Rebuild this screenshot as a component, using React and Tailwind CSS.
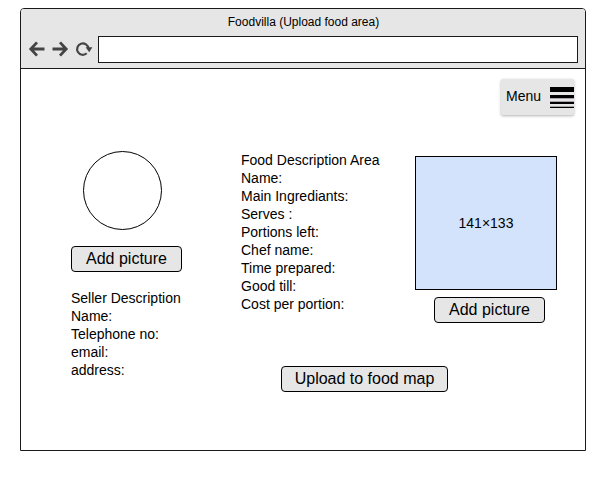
const SELLER_FIELDS = ["Seller Description", "Name:", "Telephone no:", "email:", "address:"];

const FOOD_FIELDS = [
  "Food Description Area",
  "Name:",
  "Main Ingrediants:",
  "Serves :",
  "Portions left:",
  "Chef name:",
  "Time prepared:",
  "Good till:",
  "Cost per portion:",
];

function Button({ className, children }) {
  return (
    <button
      className={`flex h-[26px] items-center justify-center rounded-[4px] border border-black bg-[#e6e6e6] pb-px text-[16px] leading-[18px] whitespace-nowrap text-black ${className}`}
    >
      {children}
    </button>
  );
}

function FieldList({ items }) {
  return (
    <ul className="text-[14px] leading-[18px] whitespace-nowrap">
      {items.map((item) => (
        <li key={item}>{item}</li>
      ))}
    </ul>
  );
}

function NavIcons() {
  return (
    <svg className="mt-[4px] ml-[7px] h-[17px] w-[66px] shrink-0" viewBox="0 0 66 17" fill="none" stroke="#444">
      <g strokeWidth="2.8">
        <path d="M16.500 9H4M9 2.400 2.800 9 9 15.600" />
        <path d="M24.500 9h12.500M32 2.400l6.200 6.600-6.200 6.600" />
      </g>
      <path d="M58.700 13.300A5.700 5.700 0 1 1 60.500 8.500" strokeWidth="2.200" />
      <path d="M57.600 7.300h6.800l-3.200 5z" fill="#444" stroke="none" />
    </svg>
  );
}

function BrowserBar() {
  return (
    <header className="h-[60px] rounded-t-[3px] border-b border-[#1a1a1a] bg-[#e6e6e6]">
      <h1 className="h-[27px] pt-[5px] pl-px text-center text-[12px] leading-[16px]">Foodvilla (Upload food area)</h1>
      <div className="flex">
        <NavIcons />
        <div className="ml-[4px] h-[27px] w-[480px] border border-[#1a1a1a] bg-white" />
      </div>
    </header>
  );
}

function Menu() {
  return (
    <button className="mt-[10px] mr-[11px] ml-auto flex h-[36px] w-[73px] justify-between rounded-[2px] bg-[#e6e6e6] pl-[5px] shadow-[0_1px_3px_rgba(0,0,0,0.3)]">
      <span className="mt-[8px] text-[14px] leading-[18px]">Menu</span>
      <svg className="mt-[8px] h-[21px] w-[24px]" viewBox="0 0 24 21" shapeRendering="crispEdges">
        <path d="M0 0h24v5H0zM0 8h24v3H0zM0 15h24v2H0zM0 20h24v1H0z" />
        <path d="M0 11h24v1H0zM0 14h24v1H0zM0 19h24v1H0z" fill="#a7a2a7" />
      </svg>
    </button>
  );
}

export default function App() {
  return (
    <div className="h-[496px] w-[612px] bg-white pt-[8px] pl-[20px] font-['Liberation_Sans',Arial,sans-serif] text-black">
      <div className="h-[443px] w-[566px] rounded-t-[4px] border border-[#1a1a1a]">
        <BrowserBar />
        <Menu />
        <main className="mt-[36px] flex items-start pl-[50px]">
          <section className="w-[170px]">
            <div className="ml-[12px] size-[79px] rounded-full border border-black" />
            <Button className="mt-[16px] mb-[17px] w-[111px]">Add picture</Button>
            <FieldList items={SELLER_FIELDS} />
          </section>
          <section className="w-[174px]">
            <FieldList items={FOOD_FIELDS} />
            <Button className="mt-[53px] ml-[40px] w-[167px]">Upload to food map</Button>
          </section>
          <section className="pt-[5px]">
            <div className="flex h-[134px] w-[142px] items-center justify-center border border-black bg-[#d4e3fc] text-[14px] leading-[18px]">
              141×133
            </div>
            <Button className="mt-[7px] ml-[19px] w-[111px]">Add picture</Button>
          </section>
        </main>
      </div>
    </div>
  );
}
